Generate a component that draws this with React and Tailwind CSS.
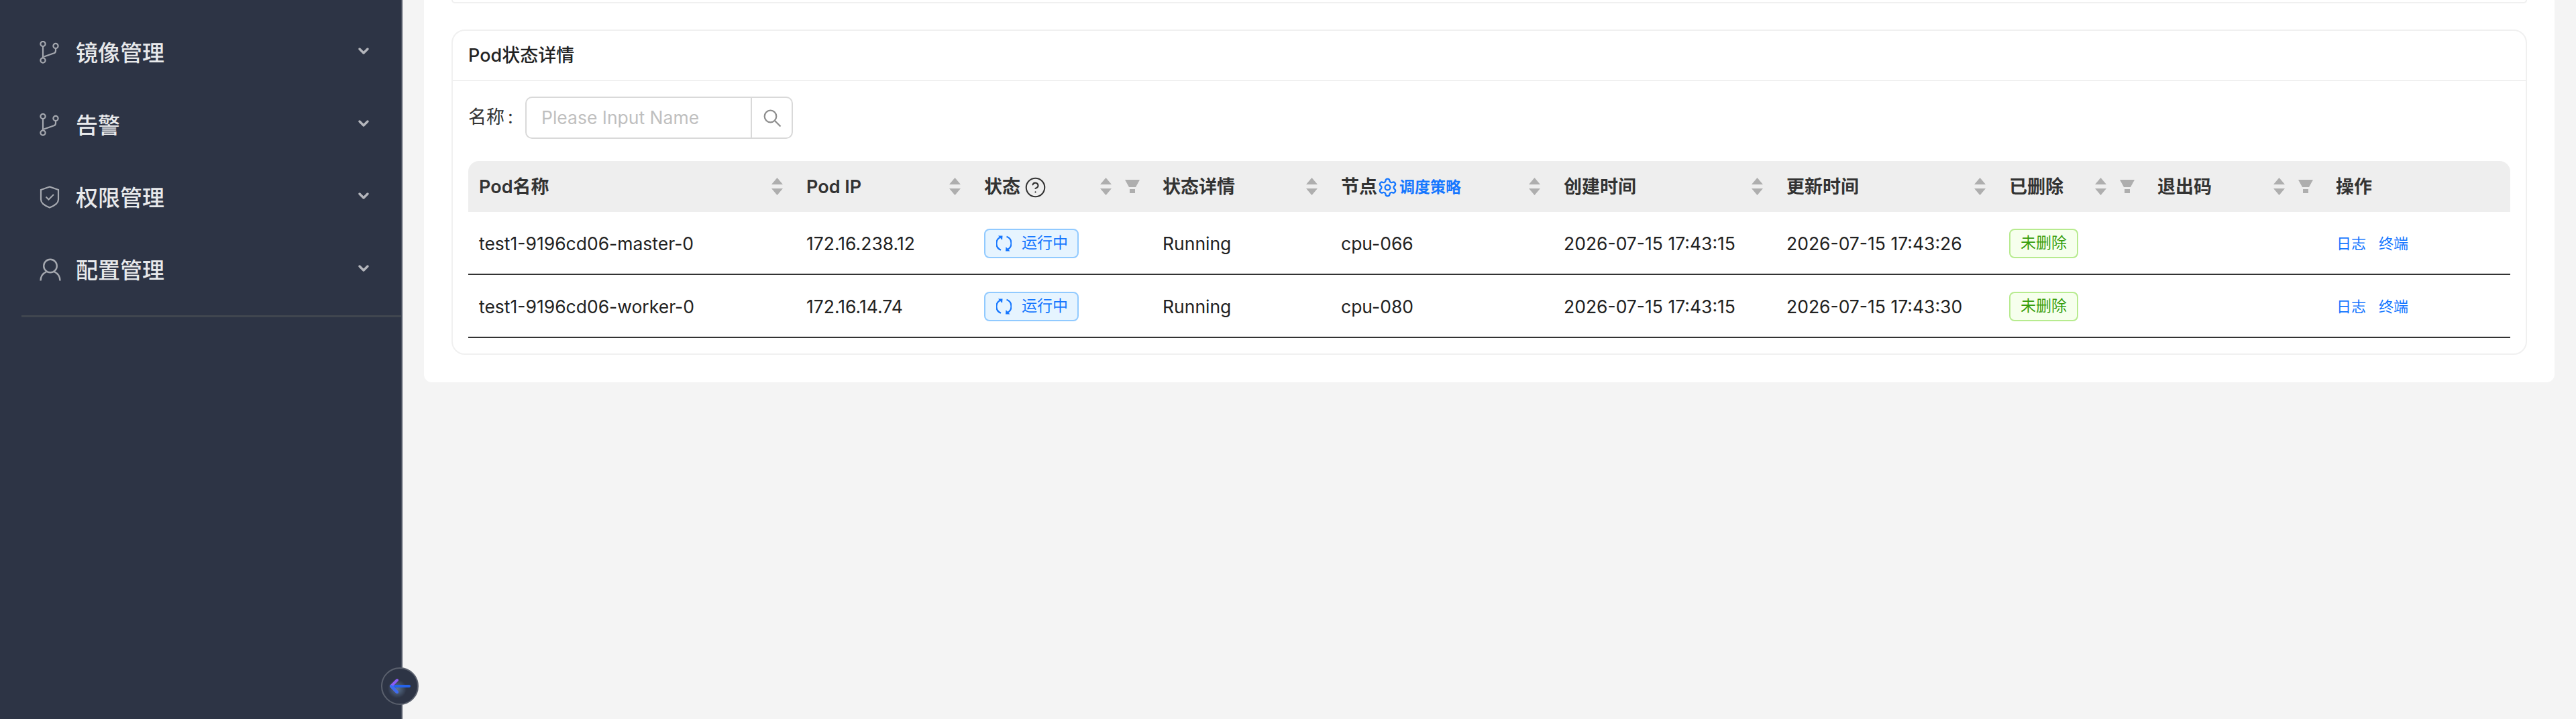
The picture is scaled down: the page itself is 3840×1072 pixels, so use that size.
import React from 'react';
import { ChevronDown, Settings, CircleHelp } from 'lucide-react';

const BranchIcon = () => (
  <svg width="30" height="34" viewBox="0 0 30 34" fill="none" stroke="#a6a9b0" strokeWidth="2.2" className="shrink-0">
    <circle cx="5" cy="4.5" r="3.6" />
    <circle cx="24" cy="7.5" r="3.6" />
    <circle cx="5" cy="29" r="3.6" />
    <path d="M5 8v17.4M6.5 23.5l15-5.2c1.6-.6 2.5-2 2.5-3.6v-3.6" />
  </svg>
);

const ShieldIcon = () => (
  <svg width="30" height="34" viewBox="0 0 30 34" fill="none" stroke="#a6a9b0" strokeWidth="2.2" className="shrink-0">
    <path d="M15 1.5 2 6v14.5c0 5 6.5 9.5 13 12 6.5-2.5 13-7 13-12V6z" />
    <path d="m9.5 16.5 4 4 7.5-7.5" strokeWidth="2" />
  </svg>
);

const UserIcon = () => (
  <svg width="32" height="34" viewBox="0 0 32 34" fill="none" stroke="#a6a9b0" strokeWidth="2.4" className="shrink-0">
    <circle cx="16" cy="11.5" r="9.8" />
    <path d="M1.5 33.5C1.5 26.5 6 22 10.5 20M30.5 33.5C30.5 26.5 26 22 21.5 20" />
  </svg>
);

const SyncIcon = () => (
  <svg width="23" height="24" viewBox="0 0 23 24" fill="none" className="shrink-0">
    <path d="M6.5 2.5A10.5 10.5 0 0 0 7 21.8M15.5 1.8A10.5 10.5 0 0 1 16 21.4" stroke="#1677ff" strokeWidth="2.2" />
    <path d="M3 .5h6.5L9 7zM14 23.5h6.5L14.5 17z" fill="#1677ff" />
  </svg>
);

const SearchIcon = () => (
  <svg width="28" height="28" viewBox="0 0 28 28" fill="none" stroke="#8c8c8c" strokeWidth="2.2">
    <circle cx="11.5" cy="11.5" r="8.8" />
    <path d="m18 18 8.5 8.5" />
  </svg>
);

const SortIcon = () => (
  <svg width="17" height="26" viewBox="0 0 17 26" fill="#aeaeae" className="shrink-0">
    <path d="M8.5 0 17 10H0zM0 16h17l-8.5 10z" />
  </svg>
);

const FilterIcon = () => (
  <svg width="22" height="20" viewBox="0 0 22 20" fill="#aeaeae" className="shrink-0">
    <path d="M0 0h22l-6 11H6z" />
    <path d="M7 14h8v6H7z" />
  </svg>
);

const menus = [
  { label: '镜像管理', icon: <BranchIcon /> },
  { label: '告警', icon: <BranchIcon /> },
  { label: '权限管理', icon: <ShieldIcon /> },
  { label: '配置管理', icon: <UserIcon /> },
];

const pods = [
  { name: 'test1-9196cd06-master-0', ip: '172.16.238.12', node: 'cpu-066', created: '2026-07-15 17:43:15', updated: '2026-07-15 17:43:26' },
  { name: 'test1-9196cd06-worker-0', ip: '172.16.14.74', node: 'cpu-080', created: '2026-07-15 17:43:15', updated: '2026-07-15 17:43:30' },
];

const HeadCell = ({ children, filter, sort = true }) => (
  <th className={`h-[76px] pl-4 text-left text-[27px] font-semibold text-[#333] bg-[#eeeeee] first:rounded-tl-2xl last:rounded-tr-2xl ${filter ? 'pr-[18px]' : 'pr-[19px]'}`}>
    <div className="flex items-center justify-between">
      <div className="flex items-center pt-[2px] whitespace-nowrap">{children}</div>
      {sort && (
        <div className="flex items-center gap-5">
          <SortIcon />
          {filter && <FilterIcon />}
        </div>
      )}
    </div>
  </th>
);

const Cell = ({ children }) => (
  <td className="h-[94px] px-4 pt-[3px] border-b-2 border-[#333333] text-[#222] whitespace-nowrap">{children}</td>
);

const App = () => {
  return (
    <div className="relative flex h-[1072px] overflow-hidden bg-[#f4f4f4] font-['Inter','Noto_Sans_CJK_SC',sans-serif] text-[26.5px]">
      <aside className="w-[600px] shrink-0 bg-[#2d3445] border-r-2 border-[#4b5261] pt-6">
        {menus.map((m) => (
          <div key={m.label} className="flex items-center h-[108px] pl-[59px] pr-[44px]">
            <div className="w-[54px] shrink-0">{m.icon}</div>
            <span className="flex-1 pt-[2px] text-[33px] leading-none font-medium text-[#e8e9eb]">{m.label}</span>
            <ChevronDown size={24} strokeWidth={3.5} className="text-[#b4b6bc] -mt-1" />
          </div>
        ))}
        <div className="ml-8 mt-[14px] h-[3px] bg-[#40464f]" />
      </aside>

      <main className="flex-1 pl-8 pr-8">
        <div className="bg-white rounded-b-xl px-[41px] pb-[41px]">
          <div className="h-[5px] border-b-2 border-x-2 border-[#f0f0f0] rounded-b-2xl mb-[39px]" />

          <section className="border-2 border-[#f0f0f0] rounded-[20px]">
            <div className="flex items-center h-[75px] px-[23px] pt-[2px] border-b-2 border-[#f0f0f0] text-[27px] font-medium text-[#222]">
              Pod状态详情
            </div>
            <div className="px-[23px] pt-[23px] pb-[23px]">
              <div className="flex items-center mb-[33px]">
                <span className="w-[85px] text-[27px] text-[#333]">名称<span className="ml-[5px]">:</span></span>
                <div className="flex h-[63px] w-[399px] border-2 border-[#d9d9d9] rounded-[10px]">
                  <input
                    placeholder="Please Input Name"
                    className="w-[334px] px-[22px] outline-none placeholder:text-[#bfbfbf]"
                  />
                  <div className="flex flex-1 items-center justify-center border-l-2 border-[#d9d9d9]">
                    <SearchIcon />
                  </div>
                </div>
              </div>

              <table className="w-full table-fixed border-separate border-spacing-0">
                <colgroup>
                  <col className="w-[488px]" />
                  <col className="w-[265px]" />
                  <col className="w-[266px]" />
                  <col className="w-[266px]" />
                  <col className="w-[332px]" />
                  <col className="w-[332px]" />
                  <col className="w-[332px]" />
                  <col className="w-[221px]" />
                  <col className="w-[266px]" />
                  <col className="w-[276px]" />
                </colgroup>
                <thead>
                  <tr>
                    <HeadCell>Pod名称</HeadCell>
                    <HeadCell>Pod IP</HeadCell>
                    <HeadCell filter>
                      状态
                      <CircleHelp size={33} strokeWidth={1.5} className="ml-[6px] text-[#333]" />
                    </HeadCell>
                    <HeadCell>状态详情</HeadCell>
                    <HeadCell>
                      节点
                      <Settings size={31} strokeWidth={1.8} className="text-[#1677ff]" />
                      <span className="ml-[2px] text-[23px] text-[#1677ff]">调度策略</span>
                    </HeadCell>
                    <HeadCell>创建时间</HeadCell>
                    <HeadCell>更新时间</HeadCell>
                    <HeadCell filter>已删除</HeadCell>
                    <HeadCell filter>退出码</HeadCell>
                    <HeadCell sort={false}>操作</HeadCell>
                  </tr>
                </thead>
                <tbody>
                  {pods.map((p) => (
                    <tr key={p.name}>
                      <Cell>{p.name}</Cell>
                      <Cell>{p.ip}</Cell>
                      <Cell>
                        <span className="inline-flex items-center h-[44px] w-[141px] -mt-[3px] pl-[16px] gap-[15px] border-2 border-[#91caff] bg-[#e6f4ff] rounded-lg text-[23px] text-[#1677ff] align-middle">
                          <SyncIcon />
                          运行中
                        </span>
                      </Cell>
                      <Cell>Running</Cell>
                      <Cell>{p.node}</Cell>
                      <Cell>{p.created}</Cell>
                      <Cell>{p.updated}</Cell>
                      <Cell>
                        <span className="inline-flex items-center justify-center h-[44px] w-[103px] -mt-[3px] border-2 border-[#b7eb8f] bg-[#f6ffed] rounded-lg text-[23px] text-[#389e0d] align-middle">
                          未删除
                        </span>
                      </Cell>
                      <Cell />
                      <Cell>
                        <div className="flex gap-[19px] pl-[1px] text-[22px] text-[#1677ff]">
                          <a>日志</a>
                          <a>终端</a>
                        </div>
                      </Cell>
                    </tr>
                  ))}
                </tbody>
              </table>
            </div>
          </section>
        </div>
      </main>

      <button className="absolute left-[568px] top-[995px] flex items-center justify-center w-[56px] h-[56px] rounded-full bg-[#2d3445] border-2 border-[#5a606d]">
        <svg width="44" height="44" viewBox="0 0 44 44" fill="none">
          <defs>
            <radialGradient id="arrowGlow">
              <stop offset="0" stopColor="#7da2c9" stopOpacity="0.6" />
              <stop offset="1" stopColor="#7da2c9" stopOpacity="0" />
            </radialGradient>
          </defs>
          <circle cx="18" cy="26" r="14" fill="url(#arrowGlow)" />
          <path d="M36 22H12" stroke="#2563eb" strokeWidth="4" strokeLinecap="round" />
          <path d="M18 13l-9 9 9 9" stroke="#8b5cf6" strokeWidth="4" strokeLinecap="round" strokeLinejoin="round" />
          <path d="M9 22l9 9" stroke="#3b6cf0" strokeWidth="4" strokeLinecap="round" />
        </svg>
      </button>
    </div>
  );
};

export default App;
